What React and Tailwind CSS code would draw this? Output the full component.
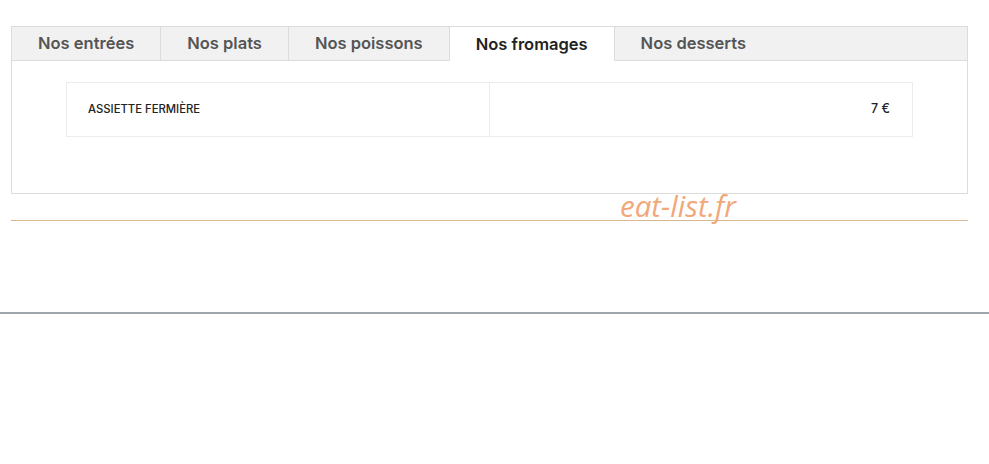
import React from 'react';

const tabs = ['Nos entrées', 'Nos plats', 'Nos poissons', 'Nos fromages', 'Nos desserts'];

const App = () => {
  const active = 3;
  return (
    <div className="relative w-[989px] h-[464px] bg-white overflow-hidden pt-[26px] font-['Inter',sans-serif]">
      <div className="ml-[11px] w-[957px] border border-[#dcdcdc]">
        <div className="flex h-[34px] bg-[#f1f1f1]">
          {tabs.map((tab, i) => (
            <div
              key={tab}
              className={
                i === active
                  ? 'flex items-center px-[26px] bg-white border-l border-[#dcdcdc] text-[16.5px] font-semibold text-[#222]'
                  : i === 0
                  ? 'flex items-center px-[26px] border-b border-[#dcdcdc] text-[16.5px] font-semibold text-[#555]'
                  : 'flex items-center px-[26px] border-l border-b border-[#dcdcdc] text-[16.5px] font-semibold text-[#555]'
              }
            >
              {tab}
            </div>
          ))}
          <div className="flex-1 border-b border-[#dcdcdc]" />
        </div>
        <div className="px-[54px] pt-[21px] pb-[56px]">
          <div className="grid grid-cols-2 h-[55px] border border-[#ececec]">
            <div className="flex items-center px-[21px] border-r border-[#ececec] text-[11.3px] font-medium text-[#222] uppercase">
              Assiette fermière
            </div>
            <div className="flex items-center justify-end px-[22px] text-[12.5px] font-medium text-[#222]">
              7 €
            </div>
          </div>
        </div>
      </div>
      <div className="ml-[11px] w-[957px] mt-[26px] h-px bg-[#d8b98f]" />
      <div className="mt-[91px] h-[2px] bg-[#9ca5a9]" />
      <span className="absolute left-[620px] top-[191px] font-['Open_Sans',sans-serif] italic text-[29.5px] leading-none text-[#f2a77a]">
        eat-list.fr
      </span>
    </div>
  );
};

export default App;
